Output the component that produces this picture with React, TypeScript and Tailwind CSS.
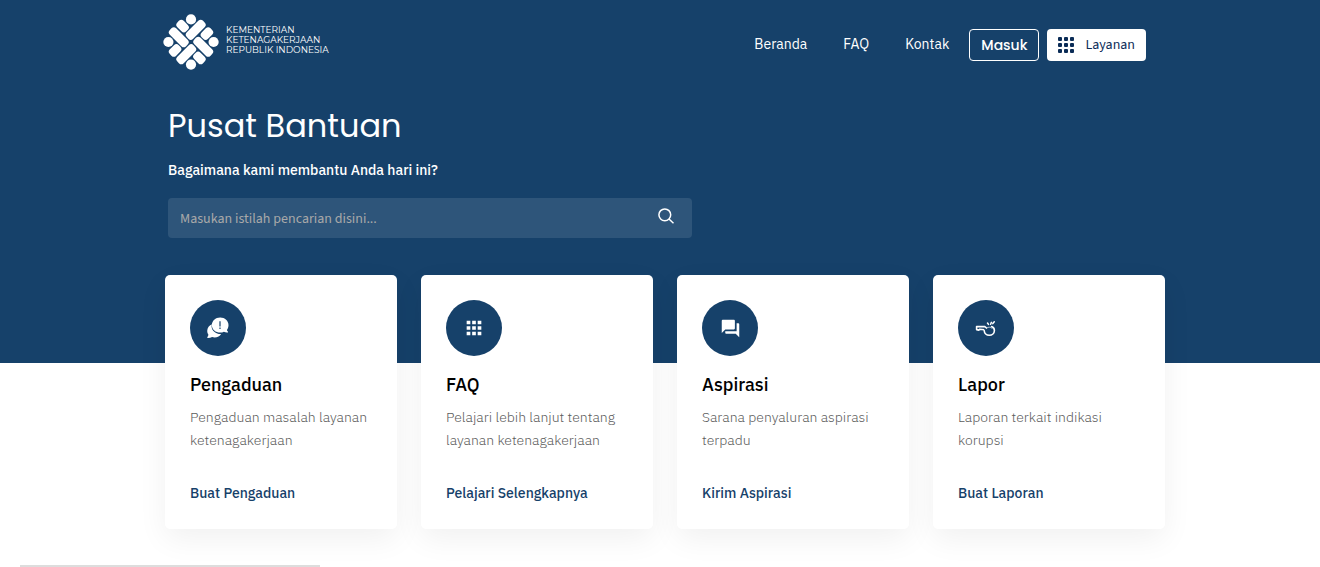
import type { ReactNode } from "react";
import { MdApps, MdForum } from "react-icons/md";

function Emblem() {
  return (
    <svg viewBox="-28 -28 56 56" className="size-14 shrink-0" fill="#fff" aria-hidden="true">
      {[0, 90, 180, 270].map((angle) => (
        <g key={angle} transform={`rotate(${angle})`}>
          <circle cx="0" cy="-22.6" r="5.100" />
          <g transform="rotate(45)">
            <rect x="-23.500" y="0.8" width="23" height="9" rx="3.400" />
            <rect x="-23.500" y="-9.800" width="12.600" height="9" rx="3.400" />
          </g>
        </g>
      ))}
    </svg>
  );
}

function ComplaintIcon() {
  return (
    <svg viewBox="0 0 24 24" className="size-6" aria-hidden="true">
      <path
        fill="#fff"
        d="M6.200 8.200C3.200 9.300 1.200 11.800 1.200 14.900c0 1.400.4 2.700 1.200 3.800-.1.900-.5 1.700-1 2.400-.3.500 0 1 .6 1 1.500 0 2.900-.3 4.100-1 .8.200 1.600.4 2.500.4 2.900 0 5.300-1.300 6.500-3.500-5 .2-9.500-3.300-9.500-7.600 0-.8.2-1.500.6-2.200z"
      />
      <path
        fill="#fff"
        d="M14.200 1.600c4.700 0 8.300 3.400 8.300 7.600 0 1.800-.6 3.400-1.600 4.700.1.600.4 1.100.9 1.500.5.400.3 1-.3 1-1.400.1-2.600-.2-3.600-.7-1.100.6-2.400.9-3.700.9-4.700 0-8.300-3.200-8.300-7.400S9.500 1.600 14.200 1.600z"
      />
      <path stroke="#16416a" strokeWidth="1.200" d="M14 5.300v5.200M14 11.500v1.400" />
    </svg>
  );
}

function WhistleIcon() {
  return (
    <svg viewBox="0 0 24 24" className="size-6" fill="none" stroke="#fff" aria-hidden="true">
      <path strokeWidth="1.600" strokeLinejoin="round" d="M10.600 10.600H2.600v3l2.200.5 1-.9 4.400.6" />
      <path strokeWidth="1.600" strokeLinecap="round" d="M10.800 10.600l1.700 1.400M17.600 10.600c1.800.7 2.800 2.200 2.800 3.900 0 2.700-2.300 4.700-5.100 4.700-2.900 0-5-2-5.100-4.700" />
      <path strokeWidth="1" opacity="0.7" d="M12.500 12.200c.7-.6 1.600-1 2.700-1 1.400 0 2.500.6 3.100 1.500" />
      <path strokeWidth="1.500" strokeLinecap="round" d="M14.500 8.400 13.500 7M16.600 8.200l.8-1.800M18.800 7.600l1.500-1.800" />
    </svg>
  );
}

function GridDots() {
  return (
    <svg viewBox="0 0 16 16" className="size-4" fill="#0b2c57" aria-hidden="true">
      {[0, 6, 12].map((y) => [0, 6, 12].map((x) => <rect key={`${x}-${y}`} x={x} y={y} width="4" height="4" rx="1" />))}
    </svg>
  );
}

type Service = { title: string; text: string; action: string; icon: ReactNode };

const services: Service[] = [
  { title: "Pengaduan", text: "Pengaduan masalah layanan ketenagakerjaan", action: "Buat Pengaduan", icon: <ComplaintIcon /> },
  { title: "FAQ", text: "Pelajari lebih lanjut tentang layanan ketenagakerjaan", action: "Pelajari Selengkapnya", icon: <MdApps size={22} /> },
  { title: "Aspirasi", text: "Sarana penyaluran aspirasi terpadu", action: "Kirim Aspirasi", icon: <MdForum size={21} /> },
  { title: "Lapor", text: "Laporan terkait indikasi korupsi", action: "Buat Laporan", icon: <WhistleIcon /> },
];

export default function App() {
  return (
    <div className="overflow-x-hidden bg-white font-['IBM_Plex_Sans',Roboto,sans-serif] text-sm">
      <div className="bg-[#16416a] pb-[125px] pl-2.5 text-white">
        <header className="mx-auto flex max-w-[1004px] flex-wrap items-center justify-between gap-4 pt-3.5 pr-[21px]">
          <a href="#" className="flex items-center gap-[7px]">
            <Emblem />
            <span className="-mt-1 font-['Montserrat',Inter,sans-serif] text-[9px] leading-[10px]">
              KEMENTERIAN
              <br />
              KETENAGAKERJAAN
              <br />
              REPUBLIK INDONESIA
            </span>
          </a>
          <nav className="flex flex-wrap items-center gap-2 pt-1.5">
            <div className="mr-3 flex gap-9 pb-0.5">
              <a href="#">Beranda</a>
              <a href="#">FAQ</a>
              <a href="#">Kontak</a>
            </div>
            <button className="h-8 rounded border border-white px-[11px] font-['Poppins',Inter,sans-serif] font-medium">
              Masuk
            </button>
            <button className="flex h-8 items-center gap-[11px] rounded bg-white px-[11px] text-[#0b2c57]">
              <GridDots />
              <span className="font-['Source_Sans_3','Source_Sans_Pro',sans-serif] leading-5">Layanan</span>
            </button>
          </nav>
        </header>
        <section className="mx-auto max-w-[1000px] px-[3px] pt-8">
          <h1 className="font-['Poppins',Inter,sans-serif] text-[32px] leading-12">Pusat Bantuan</h1>
          <p className="mt-2.5 leading-5 font-medium">Bagaimana kami membantu Anda hari ini?</p>
          <form className="mt-[18px] flex h-10 max-w-[524px] items-center rounded bg-[#2e557a] pr-[18px] pl-3">
            <input
              type="text"
              aria-label="Pencarian"
              placeholder="Masukan istilah pencarian disini..."
              className="min-w-0 flex-1 bg-transparent pt-0.5 font-['Source_Sans_3','Source_Sans_Pro',sans-serif] outline-none placeholder:text-[#a9a9a9]"
            />
            <button type="button" aria-label="Cari" className="mb-1">
              <svg viewBox="0 0 16 16" className="size-4" fill="none" stroke="#fff" strokeWidth="1.500">
                <circle cx="6.800" cy="6.800" r="5.900" />
                <path d="m11 11 4.500 4.200" />
              </svg>
            </button>
          </form>
        </section>
      </div>
      <main className="-mt-[88px] pl-2.5">
        <div className="mx-auto grid max-w-[1000px] grid-cols-1 gap-6 sm:grid-cols-2 lg:grid-cols-4">
          {services.map((s) => (
            <article key={s.title} className="rounded-[5px] bg-white px-[25px] pt-[25px] pb-[26px] shadow-[0_10px_30px_rgba(0,0,0,0.06)]">
              <div className="flex size-14 items-center justify-center rounded-full bg-[#16416a] text-white">{s.icon}</div>
              <h2 className="mt-[17px] text-lg leading-6 font-medium text-black">{s.title}</h2>
              <p className="mt-[9px] leading-[23px] font-light text-[#5c5c5c]">{s.text}</p>
              <a href="#" className="mt-[31px] block leading-5 font-medium text-[#16416a]">
                {s.action}
              </a>
            </article>
          ))}
        </div>
        <div className="mt-9 ml-2.5 h-0.5 max-w-[300px] bg-[#dddddd]" />
      </main>
    </div>
  );
}
